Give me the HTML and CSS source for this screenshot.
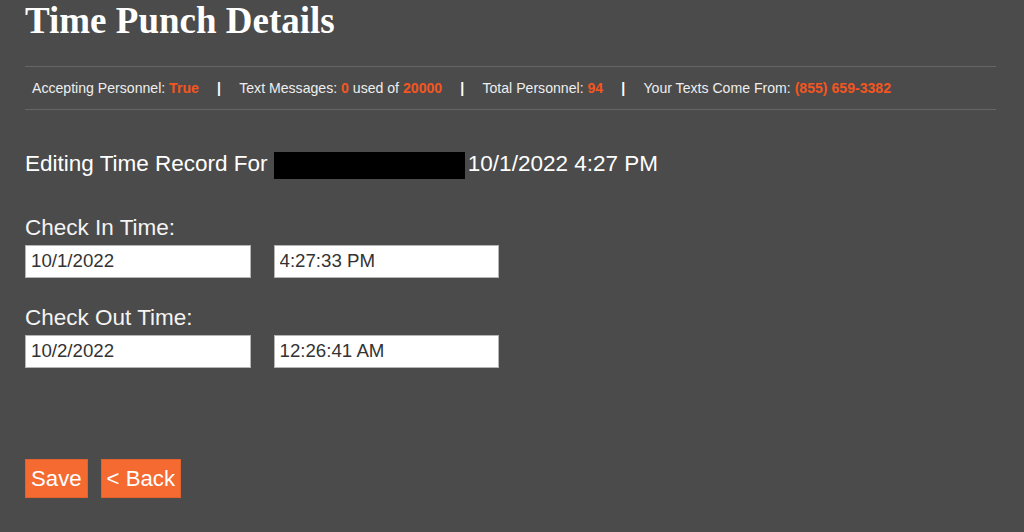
FILE: index.html
```html
<!DOCTYPE html>
<html>

<head>
    <title>Time Punch Details</title>
    <link rel="stylesheet" href="styles.css">
</head>

<body>

    <h1>Time Punch Details</h1>

    <div class="status-bar">
        <span class="status-item">Accepting Personnel: <b>True</b></span>
        <span class="divider">|</span>
        <span class="status-item">Text Messages: <b>0</b> used of <b>20000</b></span>
        <span class="divider">|</span>
        <span class="status-item">Total Personnel: <b>94</b></span>
        <span class="divider">|</span>
        <span class="status-item">Your Texts Come From: <b>(855) 659-3382</b></span>
    </div>

    <p class="record-title">Editing Time Record For <span class="redacted"></span>10/1/2022 4:27 PM</p>

    <div class="field">
        <label for="in-date">Check In Time:</label>
        <div class="field-row">
            <input type="text" id="in-date" value="10/1/2022">
            <input type="text" id="in-time" value="4:27:33 PM">
        </div>
    </div>

    <div class="field">
        <label for="out-date">Check Out Time:</label>
        <div class="field-row">
            <input type="text" id="out-date" value="10/2/2022">
            <input type="text" id="out-time" value="12:26:41 AM">
        </div>
    </div>

    <div class="actions">
        <button>Save</button>
        <button>&lt; Back</button>
    </div>

</body>

</html>
```

FILE: styles.css
```css
html,
body {
    height: 100%;
}

body {
    margin: 0;
    padding: 0 28px 0 25px;
    box-sizing: border-box;
    overflow: hidden;
    font-family: 'Liberation Sans', Arial, sans-serif;
    color: #ffffff;
    background: #4b4b4b;
}

h1 {
    margin: 0;
    height: 66px;
    font-family: 'Liberation Serif', serif;
    font-size: 37px;
    line-height: 42px;
    font-weight: bold;
}

.status-bar {
    display: flex;
    align-items: center;
    height: 42px;
    padding-left: 7px;
    border-top: 1px solid #666666;
    border-bottom: 1px solid #666666;
    font-size: 14.1px;
    color: #eeeeee;
}

.status-bar b {
    color: #f4561f;
}

.divider {
    margin: 0 18.2px;
    font-weight: bold;
    color: #ffffff;
}

.record-title {
    display: flex;
    align-items: flex-start;
    margin: 42px 0 0;
    height: 27px;
    font-size: 22.5px;
    line-height: 24px;
    white-space: pre;
}

.redacted {
    width: 191px;
    height: 27px;
    margin-right: 3px;
    background: #000000;
}

.field {
    margin-top: 30px;
}

.record-title + .field {
    margin-top: 39px;
}

label {
    display: block;
    height: 27px;
    font-size: 22.5px;
    line-height: 19px;
    color: #f4f4f4;
}

.field-row {
    display: flex;
    gap: 23px;
}

input {
    width: 225.5px;
    height: 33px;
    padding: 0 5px 2px;
    box-sizing: border-box;
    border: 1px solid #b5b5b5;
    background: #ffffff;
    font-family: inherit;
    font-size: 18.7px;
    color: #333333;
}

.actions {
    display: flex;
    gap: 13px;
    margin-top: 91px;
}

button {
    height: 39px;
    padding: 0 5px;
    border: 1px solid #e0622c;
    border-radius: 0;
    background: #f56a30;
    font-family: inherit;
    font-size: 22.2px;
    color: #ffffff;
}
```
